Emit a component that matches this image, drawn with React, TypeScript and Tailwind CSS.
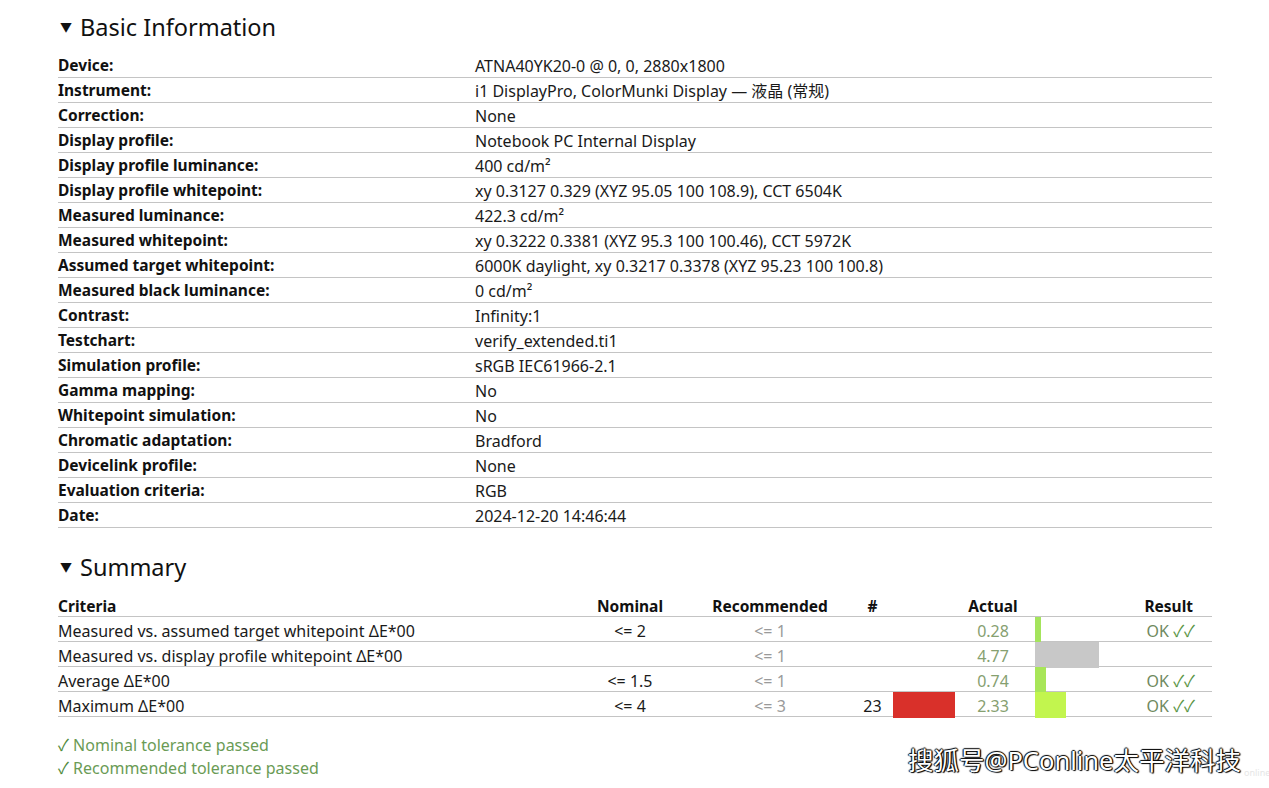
const info: [string, string][] = [
  ["Device:", "ATNA40YK20-0 @ 0, 0, 2880x1800"],
  ["Instrument:", "i1 DisplayPro, ColorMunki Display — 液晶 (常规)"],
  ["Correction:", "None"],
  ["Display profile:", "Notebook PC Internal Display"],
  ["Display profile luminance:", "400 cd/m²"],
  ["Display profile whitepoint:", "xy 0.3127 0.329 (XYZ 95.05 100 108.9), CCT 6504K"],
  ["Measured luminance:", "422.3 cd/m²"],
  ["Measured whitepoint:", "xy 0.3222 0.3381 (XYZ 95.3 100 100.46), CCT 5972K"],
  ["Assumed target whitepoint:", "6000K daylight, xy 0.3217 0.3378 (XYZ 95.23 100 100.8)"],
  ["Measured black luminance:", "0 cd/m²"],
  ["Contrast:", "Infinity:1"],
  ["Testchart:", "verify_extended.ti1"],
  ["Simulation profile:", "sRGB IEC61966-2.1"],
  ["Gamma mapping:", "No"],
  ["Whitepoint simulation:", "No"],
  ["Chromatic adaptation:", "Bradford"],
  ["Devicelink profile:", "None"],
  ["Evaluation criteria:", "RGB"],
  ["Date:", "2024-12-20 14:46:44"],
];

type Row = {
  name: string;
  nominal: string;
  rec: string;
  count?: string;
  actual: string;
  bar: number;
  barColor: string;
  ok: boolean;
};

const summary: Row[] = [
  { name: "Measured vs. assumed target whitepoint ΔE*00", nominal: "<= 2", rec: "<= 1", actual: "0.28", bar: 6, barColor: "bg-[#a4e45c]", ok: true },
  { name: "Measured vs. display profile whitepoint ΔE*00", nominal: "", rec: "<= 1", actual: "4.77", bar: 64, barColor: "bg-[#c8c8c8]", ok: false },
  { name: "Average ΔE*00", nominal: "<= 1.5", rec: "<= 1", actual: "0.74", bar: 11, barColor: "bg-[#a8e658]", ok: true },
  { name: "Maximum ΔE*00", nominal: "<= 4", rec: "<= 3", count: "23", actual: "2.33", bar: 31, barColor: "bg-[#c2f54e]", ok: true },
];

const cols = "grid grid-cols-[517px_110px_170px_35px_70px_66px_84px_102px]";

function Heading({ children }: { children: string }) {
  return (
    <h2 className="flex items-center h-[34px] pt-[2px] text-[23.5px] text-[#111]">
      <span className="text-[12px] w-[20px] ml-[2px] leading-none">▼</span>
      {children}
    </h2>
  );
}

export default function App() {
  return (
    <div
      className="relative w-[1269px] h-[788px] overflow-hidden bg-white text-[16px] text-[#1a1a1a]"
      style={{ fontFamily: '"Noto Sans", "Noto Sans CJK SC", sans-serif' }}
    >
      <div className="pl-[58px] w-[1212px] pt-[10px]">
        <Heading>Basic Information</Heading>
        <div className="mt-[9px]">
          {info.map(([k, v]) => (
            <div key={k} className="flex h-[25px] pt-[2px] items-center border-b border-[#c4c4c4]">
              <div className="w-[417px] font-bold text-[15.5px] text-[#111]">{k}</div>
              <div>{v}</div>
            </div>
          ))}
        </div>

        <div className="mt-[22px]">
          <Heading>Summary</Heading>
        </div>
        <div className="mt-[9px]">
          <div className={`${cols} h-[24px] pt-[2px] items-center border-b border-[#c4c4c4] font-bold text-[15.5px] text-[#111]`}>
            <div>Criteria</div>
            <div className="text-center">Nominal</div>
            <div className="text-center">Recommended</div>
            <div className="text-center">#</div>
            <div />
            <div className="text-center">Actual</div>
            <div />
            <div className="text-right pr-[19px]">Result</div>
          </div>
          {summary.map((r) => (
            <div key={r.name} className={`${cols} h-[25px] items-center border-b border-[#c4c4c4]`}>
              <div className="pt-[2px]">{r.name}</div>
              <div className="pt-[2px] text-center">{r.nominal}</div>
              <div className="pt-[2px] text-center text-[#9a9a9a]">{r.rec}</div>
              <div className="pt-[2px] text-center">{r.count}</div>
              <div className="h-full pl-[3px]">
                {r.count && <div className="h-full w-[62px] bg-[#d9302a]" />}
              </div>
              <div className="pt-[2px] text-center text-[#86a070]">{r.actual}</div>
              <div className="h-full pl-[9px]">
                <div className={`h-full ${r.barColor}`} style={{ width: r.bar }} />
              </div>
              <div className="pt-[2px] text-right pr-[17px] text-[#6f8a60]">
                {r.ok && (
                  <>
                    OK <span className="text-[#5a9444]">✓✓</span>
                  </>
                )}
              </div>
            </div>
          ))}
        </div>

        <div className="mt-[17px] text-[#6a9b55] leading-[23px]">
          <div>
            <span className="text-[#4f8a3a]">✓</span> Nominal tolerance passed
          </div>
          <div>
            <span className="text-[#4f8a3a]">✓</span> Recommended tolerance passed
          </div>
        </div>
      </div>

      <div
        className="absolute left-[908px] top-[745px] text-[25.5px] leading-[30px] text-white"
        style={{ textShadow: "1px 1px 1px #000, -1px 0 1px #000, 0 -1px 1px #000, 1px 0 1px #000" }}
      >
        搜狐号@PConline太平洋科技
      </div>
      <div className="absolute left-[1244px] top-[766px] text-[9px] text-[#e6e6e6]">online</div>
    </div>
  );
}
